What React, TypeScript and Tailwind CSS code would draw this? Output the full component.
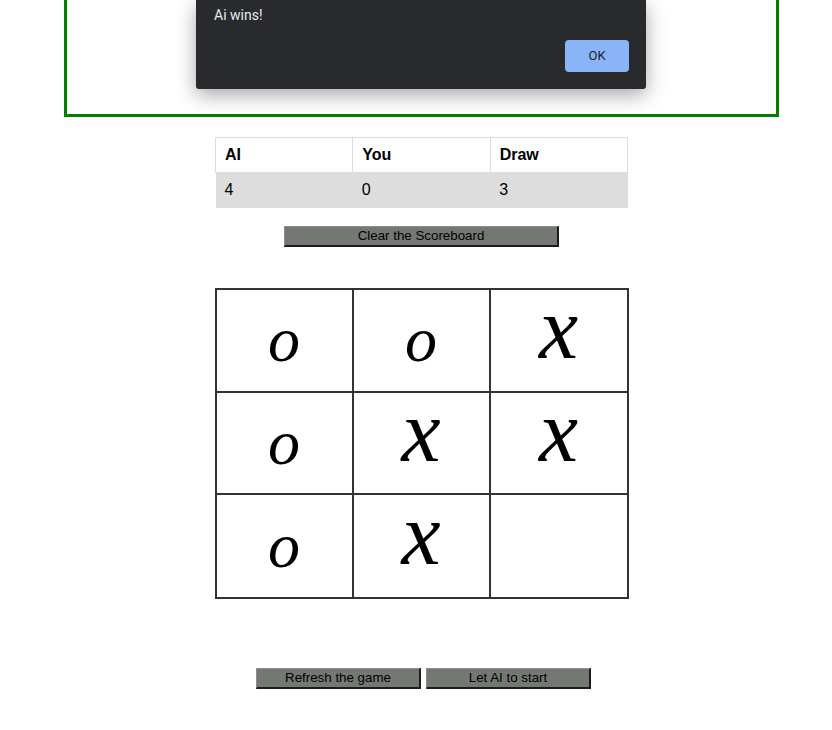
import React from "react";

type Mark = "x" | "o" | "";

const board: Mark[] = ["o", "o", "x", "o", "x", "x", "o", "x", ""];

function Cell({ mark }: { mark: Mark }) {
  return (
    <div className="flex items-center justify-center border border-[#333] bg-white">
      {mark === "x" && (
        <span className="italic text-[88px] leading-none text-black mb-[22px] [font-family:'Liberation_Serif',serif]">
          x
        </span>
      )}
      {mark === "o" && (
        <span className="italic text-[64px] leading-none text-black [font-family:'Liberation_Serif',serif]">
          o
        </span>
      )}
    </div>
  );
}

function GreyButton({ label, width }: { label: string; width: string }) {
  return (
    <button
      className={`${width} h-[21px] bg-[#737972] text-[13.33px] leading-none text-black border-t border-l border-[#8a8f89] border-b-2 border-r-2 border-b-[#1c1c1c] border-r-[#1c1c1c]`}
    >
      {label}
    </button>
  );
}

export default function App(): JSX.Element {
  return (
    <div className="relative min-h-screen bg-white [font-family:'Liberation_Sans',Arial,sans-serif]">
      <div className="flex flex-col items-center pl-[11px]">
        {/* game area frame, top scrolled out of view */}
        <div className="w-[715px] h-[117px] border-x-[3px] border-b-[3px] border-[#008000]" />

        <table className="mt-[20px] w-[413px] table-fixed border-collapse text-[16px] text-black">
          <thead>
            <tr className="h-[35px]">
              <th className="border border-[#ddd] px-[9px] text-left font-bold">AI</th>
              <th className="border border-[#ddd] px-[9px] text-left font-bold">You</th>
              <th className="border border-[#ddd] px-[9px] text-left font-bold">Draw</th>
            </tr>
          </thead>
          <tbody>
            <tr className="h-[35px] bg-[#ddd]">
              <td className="px-[9px]">4</td>
              <td className="px-[9px]">0</td>
              <td className="px-[9px]">3</td>
            </tr>
          </tbody>
        </table>

        <div className="mt-[18px] flex">
          <GreyButton label="Clear the Scoreboard" width="w-[275px]" />
        </div>

        <div className="mt-[41px] grid grid-cols-[137px_137px_138px] grid-rows-[103px_102px_104px] w-[414px] border border-[#333]">
          {board.map((m, i) => (
            <Cell key={i} mark={m} />
          ))}
        </div>

        <div className="mt-[69px] ml-[4px] flex gap-[5px]">
          <GreyButton label="Refresh the game" width="w-[165px]" />
          <GreyButton label="Let AI to start" width="w-[165px]" />
        </div>
      </div>

      {/* browser alert */}
      <div className="absolute left-[196px] top-0 w-[450px] h-[89px] bg-[#292a2d] rounded-b-[3px] shadow-[0_6px_20px_rgba(0,0,0,0.35)] [font-family:Roboto,sans-serif]">
        <p className="pl-[18px] pt-[5px] text-[14px] text-[#e8eaed]">Ai wins!</p>
        <button className="absolute right-[17px] top-[40px] w-[64px] h-[32px] rounded-[4px] bg-[#8ab4f8] text-[13px] font-normal text-[#202124]">
          OK
        </button>
      </div>
    </div>
  );
}
